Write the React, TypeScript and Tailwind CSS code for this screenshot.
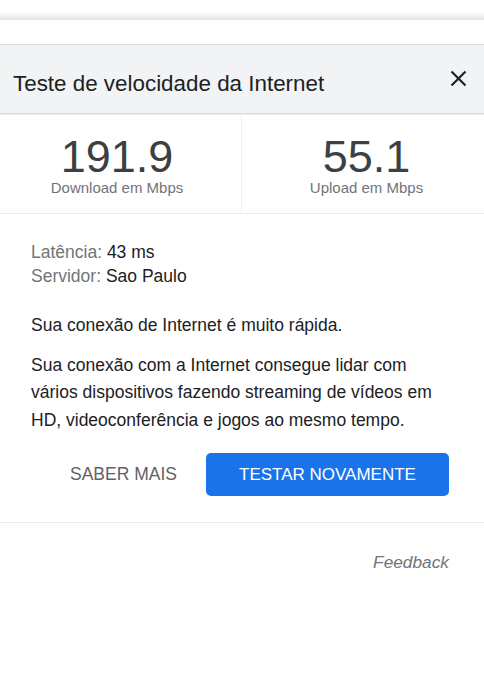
import React from "react";

export default function App() {
  return (
    <div className="min-h-screen w-full bg-white font-['Liberation_Sans',Arial,sans-serif] text-[#202124]">
      <div className="h-[20px] bg-gradient-to-b from-white from-60% to-[#e4e4e4]" />
      <div className="h-[24px] bg-white" />

      <header className="flex h-[70px] items-start justify-between border-t border-b border-[#dadce0] bg-[#f1f3f4] pl-[13px] pr-[17px]">
        <h1 className="mt-[26px] text-[22.4px] leading-[26px] font-normal text-[#202124]">
          Teste de velocidade da Internet
        </h1>
        <button className="mt-[25px]" aria-label="Fechar">
          <svg width="17" height="17" viewBox="0 0 17 17" fill="none">
            <path d="M1.5 1.5 L15.5 15.5 M15.5 1.5 L1.5 15.5" stroke="#202124" strokeWidth="2.2" />
          </svg>
        </button>
      </header>

      <section className="grid grid-cols-2 border-t border-b border-[#ececec]">
        <div className="flex flex-col items-center border-r border-[#f0f0f0] pt-[19px] pb-[16px] pr-[7px]">
          <div className="text-[45px] leading-[45px] text-[#3c4043]">191.9</div>
          <div className="text-[15px] leading-[18px] text-[#70757a]">Download em Mbps</div>
        </div>
        <div className="flex flex-col items-center pt-[19px] pb-[16px] pl-[7px]">
          <div className="text-[45px] leading-[45px] text-[#3c4043]">55.1</div>
          <div className="text-[15px] leading-[18px] text-[#70757a]">Upload em Mbps</div>
        </div>
      </section>

      <section className="pl-[31px] pr-[33px] pt-[26px] text-[17.5px]">
        <div className="leading-[24px]">
          <div>
            <span className="text-[#70757a]">Latência: </span>
            <span className="text-[#202124]">43 ms</span>
          </div>
          <div>
            <span className="text-[#70757a]">Servidor: </span>
            <span className="text-[#202124]">Sao Paulo</span>
          </div>
        </div>
        <p className="mt-[24px] leading-[27.5px]">Sua conexão de Internet é muito rápida.</p>
        <p className="mt-[12px] leading-[27.5px]">
          Sua conexão com a Internet consegue lidar com vários dispositivos fazendo streaming de vídeos em HD,
          videoconferência e jogos ao mesmo tempo.
        </p>
      </section>

      <div className="mt-[19px] flex items-center justify-end gap-[7px] pr-[35px]">
        <button className="h-[43px] px-[22px] text-[17.5px] text-[#5f6368]">SABER MAIS</button>
        <button className="h-[43px] w-[243px] rounded-[5px] bg-[#1a73e8] text-[17px] text-white">
          TESTAR NOVAMENTE
        </button>
      </div>

      <div className="mt-[26px] border-t border-[#ececec] pt-[27px] pr-[35px] text-right">
        <span className="text-[17.3px] leading-[24px] italic text-[#70757a]">Feedback</span>
      </div>
    </div>
  );
}
